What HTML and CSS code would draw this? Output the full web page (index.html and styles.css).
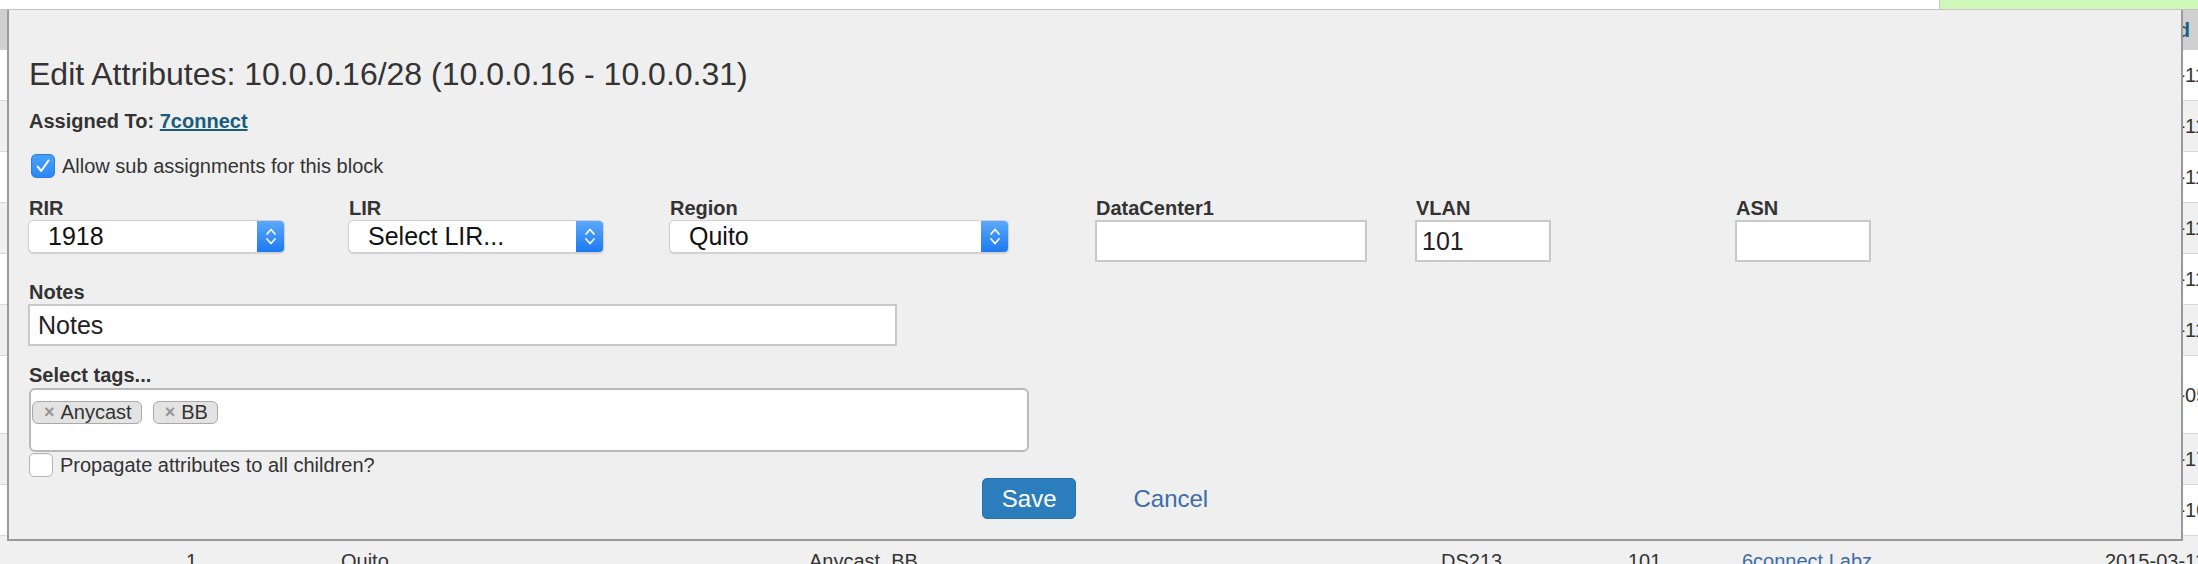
FILE: index.html
```html
<!DOCTYPE html>
<html>
<head>
<meta charset="utf-8">
<title>Edit Attributes</title>
<link rel="stylesheet" href="styles.css">
</head>
<body>
<div class="page">
  <div class="topbar">
    <div class="topbar-main"></div>
    <div class="topbar-flash"></div>
  </div>

  <div class="grid">
    <div class="grid-row grid-head">
      <div class="cell"></div><div class="cell"></div><div class="cell"></div><div class="cell"></div><div class="cell"></div><div class="cell"></div><div class="cell"></div><div class="cell cell-date">Updated</div>
    </div>
    <div class="grid-row">
      <div class="cell"></div><div class="cell"></div><div class="cell"></div><div class="cell"></div><div class="cell"></div><div class="cell"></div><div class="cell"></div><div class="cell cell-date">2015-03-11</div>
    </div>
    <div class="grid-row alt">
      <div class="cell"></div><div class="cell"></div><div class="cell"></div><div class="cell"></div><div class="cell"></div><div class="cell"></div><div class="cell"></div><div class="cell cell-date">2015-03-11</div>
    </div>
    <div class="grid-row">
      <div class="cell"></div><div class="cell"></div><div class="cell"></div><div class="cell"></div><div class="cell"></div><div class="cell"></div><div class="cell"></div><div class="cell cell-date">2015-03-11</div>
    </div>
    <div class="grid-row alt">
      <div class="cell"></div><div class="cell"></div><div class="cell"></div><div class="cell"></div><div class="cell"></div><div class="cell"></div><div class="cell"></div><div class="cell cell-date">2015-03-11</div>
    </div>
    <div class="grid-row">
      <div class="cell"></div><div class="cell"></div><div class="cell"></div><div class="cell"></div><div class="cell"></div><div class="cell"></div><div class="cell"></div><div class="cell cell-date">2015-03-11</div>
    </div>
    <div class="grid-row alt">
      <div class="cell"></div><div class="cell"></div><div class="cell"></div><div class="cell"></div><div class="cell"></div><div class="cell"></div><div class="cell"></div><div class="cell cell-date">2015-03-11</div>
    </div>
    <div class="grid-row tall">
      <div class="cell"></div><div class="cell"></div><div class="cell"></div><div class="cell"></div><div class="cell"></div><div class="cell"></div><div class="cell"></div><div class="cell cell-date">2015-03-05</div>
    </div>
    <div class="grid-row alt">
      <div class="cell"></div><div class="cell"></div><div class="cell"></div><div class="cell"></div><div class="cell"></div><div class="cell"></div><div class="cell"></div><div class="cell cell-date">2015-03-17</div>
    </div>
    <div class="grid-row">
      <div class="cell"></div><div class="cell"></div><div class="cell"></div><div class="cell"></div><div class="cell"></div><div class="cell"></div><div class="cell"></div><div class="cell cell-date">2015-03-10</div>
    </div>
    <div class="grid-row alt">
      <div class="cell"></div><div class="cell">1</div><div class="cell">Quito</div><div class="cell">Anycast, BB</div><div class="cell">DS213</div><div class="cell">101</div><div class="cell link">6connect Labz</div><div class="cell cell-date">2015-03-11</div>
    </div>
  </div>

  <div class="modal">
    <h3 class="modal-title">Edit Attributes: 10.0.0.16/28 (10.0.0.16 - 10.0.0.31)</h3>
    <p class="assigned"><b>Assigned To:</b> <a href="#" class="assigned-link">7connect</a></p>

    <div class="check-row check-row-first">
      <span class="checkbox checked">
        <svg viewBox="0 0 24 24" width="24" height="24"><path d="M6.5 12.5 L10.2 17 L17.5 6.5" fill="none" stroke="#fff" stroke-width="2" stroke-linecap="round" stroke-linejoin="round"/></svg>
      </span>
      <span class="check-label">Allow sub assignments for this block</span>
    </div>

    <div class="field-row">
      <div class="field col-rir">
        <div class="field-label">RIR</div>
        <div class="select select-rir">
          <span class="select-value">1918</span>
          <span class="select-arrow"><svg viewBox="0 0 28 33" width="28" height="33"><path d="M10 14 L14 9.5 L18 14" fill="none" stroke="#fff" stroke-width="1.7" stroke-linecap="round" stroke-linejoin="round"/><path d="M10 19 L14 23.5 L18 19" fill="none" stroke="#fff" stroke-width="1.7" stroke-linecap="round" stroke-linejoin="round"/></svg></span>
        </div>
      </div>
      <div class="field col-lir">
        <div class="field-label">LIR</div>
        <div class="select select-lir">
          <span class="select-value">Select LIR...</span>
          <span class="select-arrow"><svg viewBox="0 0 28 33" width="28" height="33"><path d="M10 14 L14 9.5 L18 14" fill="none" stroke="#fff" stroke-width="1.7" stroke-linecap="round" stroke-linejoin="round"/><path d="M10 19 L14 23.5 L18 19" fill="none" stroke="#fff" stroke-width="1.7" stroke-linecap="round" stroke-linejoin="round"/></svg></span>
        </div>
      </div>
      <div class="field col-region">
        <div class="field-label">Region</div>
        <div class="select select-region">
          <span class="select-value">Quito</span>
          <span class="select-arrow"><svg viewBox="0 0 28 33" width="28" height="33"><path d="M10 14 L14 9.5 L18 14" fill="none" stroke="#fff" stroke-width="1.7" stroke-linecap="round" stroke-linejoin="round"/><path d="M10 19 L14 23.5 L18 19" fill="none" stroke="#fff" stroke-width="1.7" stroke-linecap="round" stroke-linejoin="round"/></svg></span>
        </div>
      </div>
      <div class="field col-dc">
        <div class="field-label">DataCenter1</div>
        <div class="input input-dc"></div>
      </div>
      <div class="field col-vlan">
        <div class="field-label">VLAN</div>
        <div class="input input-small">101</div>
      </div>
      <div class="field col-asn">
        <div class="field-label">ASN</div>
        <div class="input input-small"></div>
      </div>
    </div>

    <div class="field field-notes">
      <div class="field-label">Notes</div>
      <div class="input input-notes">Notes</div>
    </div>

    <div class="field field-tags">
      <div class="field-label">Select tags...</div>
      <div class="tagbox">
        <span class="tag"><span class="tag-x">×</span>Anycast</span>
        <span class="tag"><span class="tag-x">×</span>BB</span>
      </div>
    </div>

    <div class="check-row check-row-prop">
      <span class="checkbox"></span>
      <span class="check-label">Propagate attributes to all children?</span>
    </div>

    <div class="actions">
      <button class="btn-save" type="button">Save</button>
      <a href="#" class="btn-cancel">Cancel</a>
    </div>
  </div>
</div>
</body>
</html>
```

FILE: styles.css
```css
* { box-sizing: border-box; }

html, body {
  margin: 0;
  padding: 0;
  width: 2198px;
  height: 564px;
  overflow: hidden;
  background: #ffffff;
  font-family: "Liberation Sans", Helvetica, Arial, sans-serif;
  font-size: 20px;
  color: #333333;
}

.page {
  position: relative;
  width: 2198px;
  height: 564px;
  overflow: hidden;
}

/* ---------- background page ---------- */
.topbar {
  display: flex;
  height: 9px;
}
.topbar-main {
  width: 1940px;
  background: #ffffff;
  border-right: 1px solid #c8c8c8;
}
.topbar-flash {
  flex: 1;
  background: #cff7b9;
}

.grid {
  width: 2198px;
}
.grid-row {
  display: grid;
  grid-template-columns: 176px 155px 468px 632px 187px 114px 363px 103px;
  align-items: center;
  height: 51px;
  border-bottom: 1px solid #d8d8d8;
  background: #ffffff;
  line-height: 24px;
}
.grid-row.alt { background: #f0f0f0; }
.grid-row.tall { height: 78px; }
.grid-head {
  height: 41px;
  border-top: 1px solid #c4c4c4;
  border-bottom: none;
  background: #d0d0d0;
  font-weight: bold;
  color: #1b5e80;
}
.cell {
  padding-left: 10px;
  white-space: nowrap;
}
.grid-head .cell { padding-left: 15px; }
.cell.link { color: #3d6ba7; }

/* ---------- modal ---------- */
.modal {
  position: absolute;
  left: 7px;
  top: 10px;
  width: 2176px;
  height: 531px;
  background: #efefef;
  border-left: 2px solid #9a9a9a;
  border-right: 2px solid #9a9a9a;
  border-bottom: 2px solid #9a9a9a;
  padding: 0 19px;
}

.modal-title {
  margin: 46px 0 0 1px;
  font-size: 32px;
  line-height: 36px;
  font-weight: normal;
  color: #333333;
}

.assigned {
  margin: 17px 0 0 1px;
  line-height: 24px;
  font-weight: bold;
}
.assigned-link {
  color: #1a5c7c;
  text-decoration: underline;
}

.check-row {
  display: flex;
  align-items: center;
  height: 24px;
  gap: 7px;
}
.check-row-first {
  margin-top: 21px;
  padding-left: 3px;
}
.check-row-prop {
  margin-top: 1px;
  padding-left: 1px;
}
.check-label {
  line-height: 24px;
  color: #333333;
}
.checkbox {
  display: block;
  width: 24px;
  height: 24px;
  border-radius: 5px;
  background: #ffffff;
  border: 1px solid #b5b5b5;
  box-shadow: inset 0 1px 1px rgba(0,0,0,0.06);
}
.checkbox.checked {
  background: linear-gradient(#4aa3fc, #2a86f5);
  border: 1px solid #2f7fe0;
}
.checkbox svg { display: block; margin: -1px; }

/* field row */
.field-row {
  display: flex;
  margin-top: 19px;
  height: 65px;
}
.field-label {
  font-weight: bold;
  line-height: 23px;
  height: 23px;
  padding-left: 1px;
  color: #333333;
}
.col-rir { width: 320px; }
.col-lir { width: 321px; }
.col-region { width: 426px; }
.col-dc { width: 320px; }
.col-vlan { width: 320px; }
.col-asn { width: 140px; }

.select {
  display: flex;
  align-items: center;
  height: 33px;
  background: #ffffff;
  border: 1px solid #cfcfcf;
  border-radius: 5px;
  box-shadow: 0 1px 1px rgba(0,0,0,0.12);
  overflow: hidden;
}
.select-rir { width: 257px; }
.select-lir { width: 256px; }
.select-region { width: 340px; }
.select-value {
  flex: 1;
  padding-left: 19px;
  font-size: 25px;
  line-height: 31px;
  color: #111111;
  white-space: nowrap;
}
.select-arrow {
  width: 28px;
  height: 33px;
  margin: -1px -1px -1px 0;
  background: linear-gradient(#5eaafc, #1a78f0);
}
.select-arrow svg { display: block; }

.input {
  height: 42px;
  background: #ffffff;
  border: 2px solid #c9c9c9;
  font-size: 25px;
  line-height: 38px;
  padding: 0 5px;
  color: #222222;
  white-space: nowrap;
}
.input-dc { width: 272px; }
.input-small { width: 136px; }

.field-notes { margin-top: 19px; }
.input-notes {
  width: 869px;
  padding-left: 8px;
}

.field-tags { margin-top: 18px; }
.tagbox {
  margin-top: 1px;
  margin-left: 1px;
  width: 1000px;
  height: 64px;
  background: #ffffff;
  border: 2px solid #b9b9b9;
  border-radius: 6px;
  padding: 11px 0 0 1px;
  display: flex;
  align-items: flex-start;
  gap: 11px;
}
.tag {
  display: inline-flex;
  align-items: center;
  height: 23px;
  padding: 0 9px 0 11px;
  gap: 6px;
  background: #e3e3e3;
  border: 1px solid #a9a9a9;
  border-radius: 6px;
  font-size: 20px;
  line-height: 21px;
  color: #333333;
}
.tag-x {
  font-size: 18px;
  font-weight: bold;
  color: #959595;
}

.actions {
  display: flex;
  justify-content: center;
  align-items: center;
  gap: 57px;
  margin-top: 1px;
}
.btn-save {
  height: 41px;
  padding: 0 19px;
  background: #2b7dbb;
  border: 1px solid #2671aa;
  border-radius: 5px;
  color: #ffffff;
  font-family: "Liberation Sans", Helvetica, Arial, sans-serif;
  font-size: 24px;
  line-height: 39px;
}
.btn-cancel {
  color: #3d6ca9;
  font-size: 24px;
  line-height: 41px;
  text-decoration: none;
}
```
